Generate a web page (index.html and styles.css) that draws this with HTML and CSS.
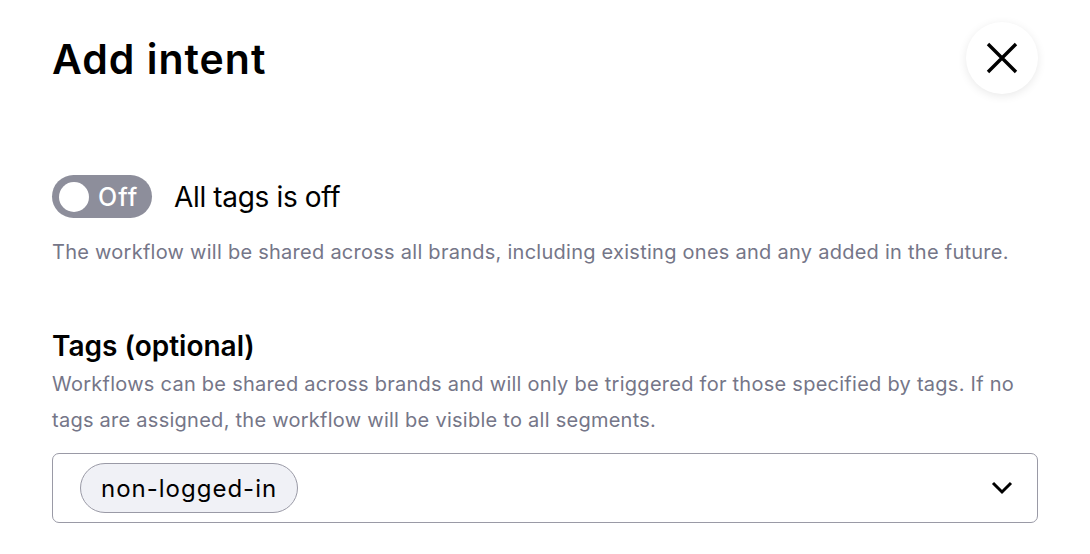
FILE: index.html
```html
<!DOCTYPE html>
<html>
<head>
<meta charset="utf-8">
<link rel="stylesheet" href="styles.css">
</head>
<body>
<div class="modal">
  <header class="head">
    <h1 class="title">Add intent</h1>
    <button class="close" aria-label="Close">
      <svg width="34" height="34" viewBox="0 0 34 34"><path d="M3 3 L31 31 M31 3 L3 31" stroke="#000" stroke-width="3.4" fill="none"/></svg>
    </button>
  </header>

  <section class="toggle-sec">
    <div class="toggle-row">
      <div class="toggle"><span class="knob"></span><span class="tlabel">Off</span></div>
      <span class="toggle-text">All tags is off</span>
    </div>
    <p class="desc">The workflow will be shared across all brands, including existing ones and any added in the future.</p>
  </section>

  <section class="tags-sec">
    <h2 class="sub">Tags (optional)</h2>
    <p class="desc multi">Workflows can be shared across brands and will only be triggered for those specified by tags. If no tags are assigned, the workflow will be visible to all segments.</p>
    <div class="select">
      <span class="chip">non-logged-in</span>
      <svg class="chev" width="22" height="14" viewBox="0 0 22 14"><path d="M2 2 L11 11 L20 2" stroke="#000" stroke-width="3" fill="none"/></svg>
    </div>
  </section>
</div>
</body>
</html>
```
FILE: styles.css
```css
* { box-sizing: border-box; }
html, body { margin: 0; padding: 0; background: #fff; }
body { font-family: "Inter", "Noto Sans", sans-serif; color: #000; }
.modal { padding: 22px 52px 0 52px; width: 1090px; }
.head { display: flex; justify-content: space-between; align-items: flex-start; }
.title { margin: 12px 0 0 0; font-size: 41px; font-weight: 600; letter-spacing: 1px; line-height: 50px; }
.close {
  width: 72px; height: 72px; border-radius: 50%; border: none; background: #fff;
  box-shadow: 0 2px 10px rgba(0,0,0,0.09); display: flex; align-items: center; justify-content: center;
  padding: 0;
}
.toggle-sec { margin-top: 81px; }
.toggle-row { display: flex; align-items: center; gap: 22px; }
.toggle {
  width: 100px; height: 43px; border-radius: 22px; background: #8d8e9b;
  display: flex; align-items: center; padding: 0 6px 0 7px; gap: 9px;
}
.knob { width: 30px; height: 30px; border-radius: 50%; background: #fff; }
.tlabel { color: #fff; font-size: 25px; font-weight: 500; letter-spacing: 1px; }
.toggle-text { font-size: 28px; letter-spacing: -0.35px; }
.desc { margin: 16px 0 0 0; font-size: 20px; color: #757688; letter-spacing: 0.26px; line-height: 36px; }
.tags-sec { margin-top: 58px; }
.sub { margin: 0; font-size: 28px; font-weight: 600; letter-spacing: 0px; line-height: 36px; }
.desc.multi { margin-top: 2px; }
.select {
  margin-top: 15px; height: 70px; border: 1px solid #9a9aa6; border-radius: 7px;
  display: flex; align-items: center; justify-content: space-between; padding: 0 24px 0 27px;
}
.chip {
  height: 50px; border-radius: 25px; background: #f0f1f6; border: 1px solid #9a9aa6;
  display: flex; align-items: center; padding: 0 20px; font-size: 24px; letter-spacing: 1px;
}
```
